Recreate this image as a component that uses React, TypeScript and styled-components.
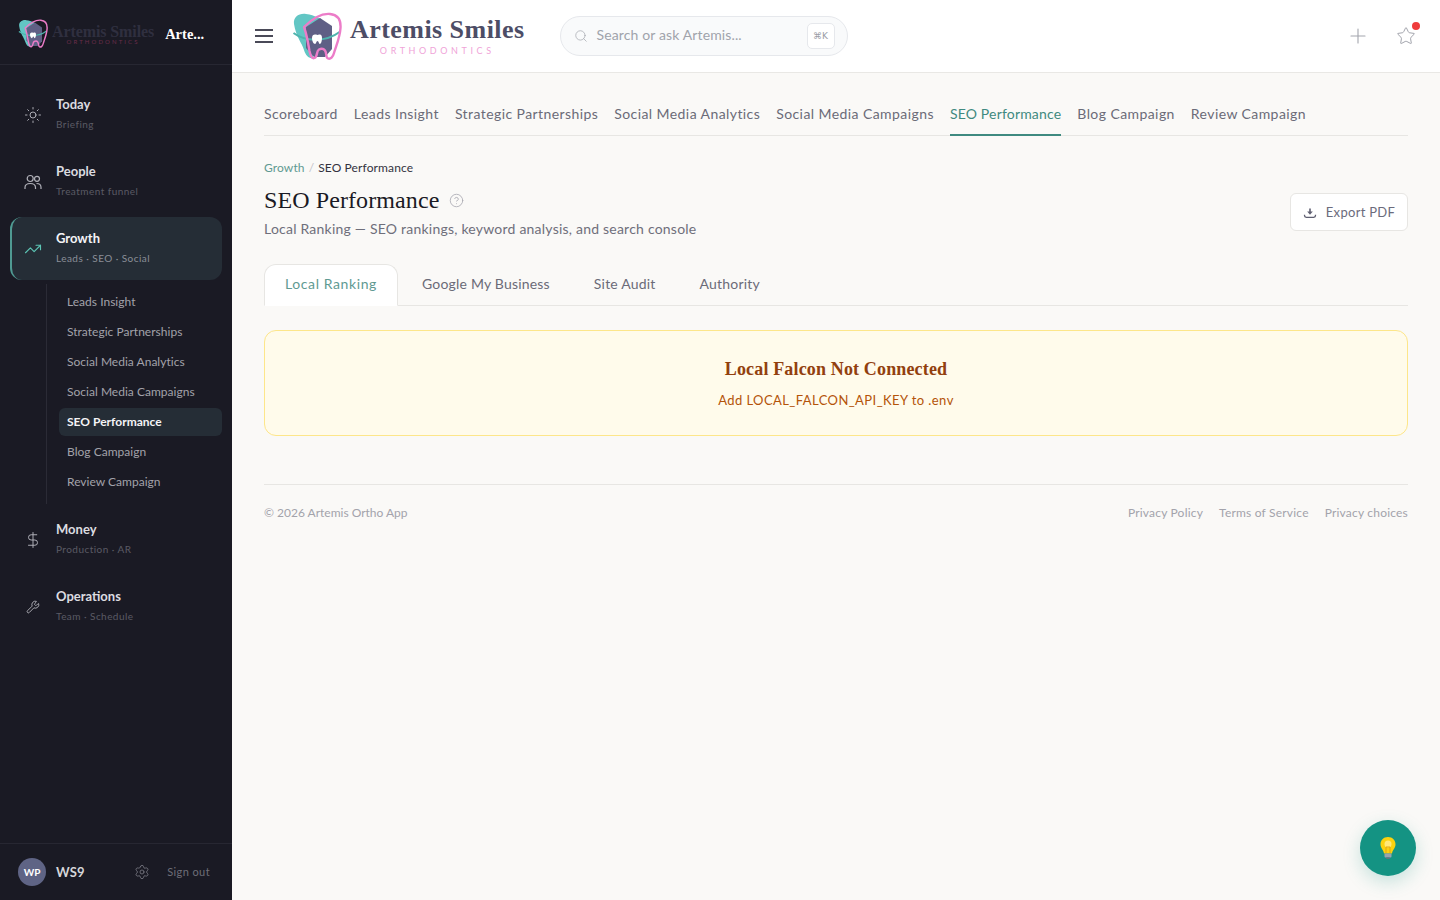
import React from 'react';
import styled, { createGlobalStyle } from 'styled-components';
import { Sun, TrendingUp, DollarSign, Wrench, CircleHelp, Settings, Search, Plus, Star } from 'lucide-react';

const sans = '"Lato", "Liberation Sans", sans-serif';
const serif = '"Liberation Serif", "DejaVu Serif", serif';

const GlobalStyle = createGlobalStyle`
  * { box-sizing: border-box; }
  html, body { margin: 0; height: 100%; }
  body { font-family: ${sans}; background: #faf9f7; color: #1a1a24; }
  #root { height: 100%; }
`;

const Shell = styled.div`
  display: flex;
  height: 900px;
  overflow: hidden;
`;

const Sidebar = styled.aside`
  width: 232px;
  flex-shrink: 0;
  background: #1a1a24;
  display: flex;
  flex-direction: column;
`;

const SideBrand = styled.div`
  height: 65px;
  display: flex;
  align-items: center;
  padding: 3px 18px 0;
  gap: 11px;
  border-bottom: 1px solid #272732;
`;

const SideBrandName = styled.span`
  font-family: ${serif};
  font-size: 14.5px;
  font-weight: 700;
  padding-top: 2px;
  color: #fff;
`;

const Nav = styled.nav`
  flex: 1;
  padding: 18px 10px 0;
  display: flex;
  flex-direction: column;
  gap: 4px;
`;

const NavCard = styled.div<{ $active?: boolean }>`
  height: 63px;
  display: flex;
  align-items: center;
  gap: 14px;
  padding-left: 12px;
  border-radius: 12px;
  background: ${(p) => (p.$active ? '#252d36' : 'transparent')};
  border-left: 2px solid ${(p) => (p.$active ? '#4f9a92' : 'transparent')};
  color: ${(p) => (p.$active ? '#5cc4b4' : '#b0b0b8')};
`;

const NavIcon = styled.span`
  width: 18px;
  height: 18px;
  display: flex;
  align-items: center;
  justify-content: center;
`;

const NavText = styled.div`
  display: flex;
  flex-direction: column;
  gap: 6px;
  padding-bottom: 2px;
`;

const NavTitle = styled.span<{ $active?: boolean }>`
  font-size: 13px;
  line-height: 16px;
  font-weight: 700;
  letter-spacing: 0;
  color: ${(p) => (p.$active ? '#f4f4f6' : '#dcdce0')};
`;

const NavSub = styled.span<{ $active?: boolean }>`
  font-size: 10px;
  line-height: 13px;
  letter-spacing: 0.45px;
  color: ${(p) => (p.$active ? '#8b8f98' : '#5a5a64')};
`;

const SubList = styled.div`
  margin: 4px 0 0 36px;
  padding: 4px 0 8px 12px;
  border-left: 1px solid #2b2b36;
  display: flex;
  flex-direction: column;
  gap: 2px;
`;

const SubItem = styled.div<{ $active?: boolean }>`
  height: 28px;
  display: flex;
  align-items: center;
  padding: 0 0 2px 8px;
  border-radius: 6px;
  font-size: 12px;
  letter-spacing: 0.02px;
  font-weight: ${(p) => (p.$active ? 700 : 400)};
  background: ${(p) => (p.$active ? '#252d36' : 'transparent')};
  color: ${(p) => (p.$active ? '#f4f4f6' : '#a2a2aa')};
`;

const SideFooter = styled.div`
  height: 57px;
  border-top: 1px solid #272732;
  display: flex;
  align-items: center;
  padding: 0 22px 0 18px;
`;

const Avatar = styled.div`
  width: 28px;
  height: 28px;
  border-radius: 50%;
  background: #5f6485;
  color: #fff;
  font-size: 10px;
  font-weight: 700;
  display: flex;
  align-items: center;
  justify-content: center;
`;

const UserName = styled.span`
  margin-left: 10px;
  font-size: 13px;
  font-weight: 700;
  letter-spacing: 0.2px;
  color: #d6d6da;
  flex: 1;
`;

const SignOut = styled.span`
  margin-left: 17px;
  margin-bottom: 1px;
  font-size: 11px;
  letter-spacing: 0.4px;
  color: #6e6e78;
`;

const GearWrap = styled.span`
  display: flex;
  color: #7c7c86;
`;

const Column = styled.div`
  flex: 1;
  min-width: 0;
  display: flex;
  flex-direction: column;
`;

const Topbar = styled.header`
  height: 73px;
  flex-shrink: 0;
  background: #fff;
  border-bottom: 1px solid #e9e8e5;
  display: flex;
  align-items: center;
  padding: 0 24px 0 23px;
`;

const Burger = styled.div`
  width: 18px;
  height: 14px;
  display: flex;
  flex-direction: column;
  justify-content: space-between;
  margin-right: 19px;
  & > i {
    display: block;
    height: 2px;
    background: #4a4a58;
  }
`;

const LogoWrap = styled.div<{ $small?: boolean }>`
  display: flex;
  align-items: center;
  gap: ${(p) => (p.$small ? '4px' : '8px')};
`;

const LogoWords = styled.div<{ $small?: boolean }>`
  display: flex;
  flex-direction: column;
  align-items: center;
  padding-top: ${(p) => (p.$small ? '4px' : '1px')};
  opacity: ${(p) => (p.$small ? 0.42 : 1)};
`;

const LogoName = styled.span<{ $small?: boolean }>`
  font-family: ${serif};
  font-weight: 700;
  white-space: nowrap;
  font-size: ${(p) => (p.$small ? '16px' : '26px')};
  line-height: ${(p) => (p.$small ? '12px' : '26px')};
  letter-spacing: ${(p) => (p.$small ? '-0.1px' : '0.45px')};
  color: #4d4d66;
`;

const LogoTag = styled.span<{ $small?: boolean }>`
  font-family: ${sans};
  white-space: nowrap;
  margin-top: ${(p) => (p.$small ? '0' : '2px')};
  font-size: ${(p) => (p.$small ? '6px' : '9px')};
  line-height: ${(p) => (p.$small ? '7px' : '11px')};
  letter-spacing: ${(p) => (p.$small ? '2.1px' : '3.6px')};
  color: ${(p) => (p.$small ? '#d4487f' : '#f0a4d8')};
`;

const SearchBox = styled.div`
  width: 288px;
  height: 40px;
  margin-left: 35px;
  border: 1px solid #e6e8ec;
  border-radius: 20px;
  background: #f9fafb;
  display: flex;
  align-items: center;
  padding: 0 12px 0 13px;
  gap: 9px;
  color: #a0a3ab;
`;

const SearchText = styled.span`
  flex: 1;
  font-size: 14px;
  line-height: 18px;
  margin-bottom: 2px;
  letter-spacing: 0.13px;
  color: #a0a3ab;
`;

const KeyHint = styled.span`
  width: 28px;
  height: 26px;
  background: #fff;
  border: 1px solid #e6e8ec;
  border-radius: 5px;
  display: flex;
  align-items: center;
  justify-content: center;
  font-family: "DejaVu Sans", sans-serif;
  font-size: 9px;
  color: #9a9da5;
`;

const TopActions = styled.div`
  margin-left: auto;
  display: flex;
  align-items: center;
  gap: 26px;
  color: #a3a5ad;
`;

const BellWrap = styled.div`
  position: relative;
  display: flex;
`;

const RedDot = styled.span`
  position: absolute;
  top: -4px;
  right: -4px;
  width: 8px;
  height: 8px;
  border-radius: 50%;
  background: #ef3b3b;
`;

const Main = styled.main`
  flex: 1;
  padding: 24px 32px 0;
  display: flex;
  flex-direction: column;
`;

const TopTabs = styled.div`
  display: flex;
  gap: 16px;
  height: 39px;
  border-bottom: 1px solid #e7e6e3;
`;

const TopTab = styled.div<{ $active?: boolean }>`
  height: 39px;
  padding-top: 8px;
  font-size: 14px;
  line-height: 18px;
  letter-spacing: ${(p) => (p.$active ? '0.18px' : '0.42px')};
  white-space: nowrap;
  color: ${(p) => (p.$active ? '#3f8a80' : '#6b6b78')};
  border-bottom: 2px solid ${(p) => (p.$active ? '#3f8a80' : 'transparent')};
`;

const Crumbs = styled.div`
  margin-top: 24px;
  display: flex;
  align-items: center;
  gap: 4px;
  font-size: 12px;
  line-height: 16px;
  letter-spacing: 0.12px;
`;

const CrumbLink = styled.span`
  color: #5f9a92;
`;

const CrumbSep = styled.span`
  color: #c3c3c8;
`;

const CrumbNow = styled.span`
  color: #33333f;
`;

const HeadRow = styled.div`
  margin-top: 8px;
  display: flex;
  align-items: flex-start;
  justify-content: space-between;
`;

const TitleRow = styled.div`
  display: flex;
  align-items: center;
  gap: 10px;
  color: #a8a8b0;
`;

const Title = styled.h1`
  margin: 0;
  font-family: ${serif};
  font-size: 24px;
  line-height: 32px;
  font-weight: 400;
  letter-spacing: 0.1px;
  color: #1a1a24;
`;

const Subtitle = styled.p`
  margin: 3px 0 0;
  font-size: 14px;
  line-height: 20px;
  letter-spacing: 0.22px;
  color: #6f6f7b;
`;

const ExportButton = styled.button`
  margin-top: 9px;
  width: 118px;
  height: 38px;
  background: #fff;
  border: 1px solid #e7e6e3;
  border-radius: 6px;
  display: flex;
  align-items: center;
  justify-content: center;
  gap: 9px;
  font-family: ${sans};
  font-size: 13px;
  letter-spacing: 0.3px;
  color: #6b6b7c;
`;

const SubTabs = styled.div`
  margin-top: 25px;
  height: 42px;
  display: flex;
  border-bottom: 1px solid #e7e6e3;
`;

const SubTab = styled.div<{ $active?: boolean }>`
  height: 42px;
  padding: 10px 20px 0;
  margin-right: ${(p) => (p.$active ? '3px' : '2px')};
  font-size: 14px;
  line-height: 18px;
  letter-spacing: ${(p) => (p.$active ? '0.6px' : '0.2px')};
  color: ${(p) => (p.$active ? '#5f9a92' : '#6b6b78')};
  background: ${(p) => (p.$active ? '#fff' : 'transparent')};
  border: 1px solid ${(p) => (p.$active ? '#e7e6e3' : 'transparent')};
  border-bottom: ${(p) => (p.$active ? '1px solid #fff' : 'none')};
  border-radius: 12px 12px 0 0;
`;

const Notice = styled.section`
  margin-top: 24px;
  height: 106px;
  background: #fffbeb;
  border: 1px solid #fde68a;
  border-radius: 12px;
  display: flex;
  flex-direction: column;
  align-items: center;
  padding-top: 26px;
`;

const NoticeTitle = styled.h3`
  margin: 0;
  font-family: ${serif};
  font-size: 18px;
  line-height: 24px;
  font-weight: 700;
  letter-spacing: 0.15px;
  color: #92400e;
`;

const NoticeText = styled.p`
  margin: 10px 0 0;
  font-size: 13px;
  line-height: 18px;
  letter-spacing: 0.42px;
  color: #b45309;
`;

const PageFooter = styled.footer`
  margin-top: 48px;
  border-top: 1px solid #e7e6e3;
  padding-top: 20px;
  display: flex;
  justify-content: space-between;
  font-size: 12px;
  line-height: 16px;
  color: #a3a3ab;
`;

const FooterLinks = styled.div`
  display: flex;
  gap: 16px;
  letter-spacing: 0.2px;
`;

const Fab = styled.button`
  position: fixed;
  right: 24px;
  bottom: 24px;
  width: 56px;
  height: 56px;
  border: none;
  border-radius: 50%;
  background: #149383;
  box-shadow: 0 6px 18px rgba(20, 147, 131, 0.22);
  display: flex;
  align-items: center;
  justify-content: center;
  padding: 0;
`;

const Tooth: React.FC<{ size: number }> = ({ size }) => (
  <svg width={size} height={(size * 48) / 50} viewBox="0 0 50 48" fill="none">
    <path
      d="M2 12C1 5 7 1 14 2c5 .6 8 2 11 3l4 2-7 7-1 32c-4 .8-7-2-9-8C10 31 4 25 2 12Z"
      fill="#62c6c4"
    />
    <path d="M14 15 28 6l12 8v23l-7 8H22l-8-9Z" fill="#5f5f85" />
    <path d="M1.500 21c12 9 33 9 46-1" stroke="#4fb4ae" strokeWidth="2" />
    <path
      d="M20 26c0-3 2-4 4-3.400 1.400.4 2 .4 3 0 2-.6 3 .6 3 3.400 0 3-1 6-2.200 6-1 0-1-3-2.300-3-1.300 0-1.300 3-2.400 3C21.500 32 20 29 20 26Z"
      fill="#fff"
    />
    <path
      d="M12 15C20 7 28 1 38 2c8 .8 11 6 10.500 14-.5 9-4 17-6.500 25-1 4-3.500 6.500-6 5.500-2.500-1-1-5-3-8-1.500-2-4-2-6-1-3 1.500-1 7-4.500 8.500-3 1.200-4-3-5-7-1-5-2-14-5.500-24Z"
      stroke="#ec7cc8"
      strokeWidth="2.400"
      strokeLinejoin="round"
    />
  </svg>
);

const Logo: React.FC<{ small?: boolean }> = ({ small }) => (
  <LogoWrap $small={small}>
    <Tooth size={small ? 30 : 50} />
    <LogoWords $small={small}>
      <LogoName $small={small}>Artemis Smiles</LogoName>
      <LogoTag $small={small}>ORTHODONTICS</LogoTag>
    </LogoWords>
  </LogoWrap>
);

const PeopleIcon: React.FC = () => (
  <svg width="18" height="18" viewBox="0 0 18 18" fill="none" stroke="currentColor" strokeWidth="1.200">
    <circle cx="6.200" cy="5.500" r="3" />
    <circle cx="13" cy="5.800" r="2.500" />
    <path d="M1 16v-1.500C1 12 3 10.500 6.200 10.500s5.300 1.500 5.300 4V16" />
    <path d="M12.500 10.500c2.800 0 4.500 1.400 4.500 3.800V16" />
  </svg>
);

const TrayIcon: React.FC = () => (
  <svg width="14" height="14" viewBox="0 0 14 14" fill="none">
    <path d="M7 3.500v4" stroke="#5e5e70" strokeWidth="1.600" />
    <path d="M4.200 6.500h5.600L7 9.800Z" fill="#5e5e70" />
    <path d="M1.500 9.800v.7c0 1.200.6 1.800 1.800 1.800h7.400c1.200 0 1.800-.6 1.800-1.800v-.7" stroke="#5e5e70" strokeWidth="1.300" />
  </svg>
);

const BulbIcon: React.FC = () => (
  <svg width="18" height="24" viewBox="0 0 18 24">
    <path d="M9 1C4.300 1 1.500 4.400 1.500 8.200c0 4 3 5.400 3.500 9.300h8c.5-3.900 3.500-5.300 3.500-9.300C16.500 4.400 13.700 1 9 1Z" fill="#fbd20f" />
    <circle cx="9" cy="8" r="3.500" fill="#ffe97a" />
    <path d="M7 17V11h4v6" fill="none" stroke="#e2a60e" strokeWidth="1" />
    <rect x="5.500" y="17.500" width="7" height="4" rx="1" fill="#9aa3ad" />
    <rect x="7" y="21.500" width="4" height="1.500" rx=".7" fill="#66707a" />
  </svg>
);

const growthLinks = [
  'Leads Insight',
  'Strategic Partnerships',
  'Social Media Analytics',
  'Social Media Campaigns',
  'SEO Performance',
  'Blog Campaign',
  'Review Campaign',
];

const topTabs = [
  'Scoreboard',
  'Leads Insight',
  'Strategic Partnerships',
  'Social Media Analytics',
  'Social Media Campaigns',
  'SEO Performance',
  'Blog Campaign',
  'Review Campaign',
];

const subTabs = ['Local Ranking', 'Google My Business', 'Site Audit', 'Authority'];

const App: React.FC = () => {
  return (
    <>
      <GlobalStyle />
      <Shell>
        <Sidebar>
          <SideBrand>
            <Logo small />
            <SideBrandName>Arte...</SideBrandName>
          </SideBrand>
          <Nav>
            <NavCard>
              <NavIcon>
                <Sun size={18} strokeWidth={1.3} />
              </NavIcon>
              <NavText>
                <NavTitle>Today</NavTitle>
                <NavSub>Briefing</NavSub>
              </NavText>
            </NavCard>
            <NavCard>
              <NavIcon>
                <PeopleIcon />
              </NavIcon>
              <NavText>
                <NavTitle>People</NavTitle>
                <NavSub>Treatment funnel</NavSub>
              </NavText>
            </NavCard>
            <div>
              <NavCard $active>
                <NavIcon>
                  <TrendingUp size={18} strokeWidth={1.5} />
                </NavIcon>
                <NavText>
                  <NavTitle $active>Growth</NavTitle>
                  <NavSub $active>Leads · SEO · Social</NavSub>
                </NavText>
              </NavCard>
              <SubList>
                {growthLinks.map((link) => (
                  <SubItem key={link} $active={link === 'SEO Performance'}>
                    {link}
                  </SubItem>
                ))}
              </SubList>
            </div>
            <NavCard>
              <NavIcon>
                <DollarSign size={18} strokeWidth={1.3} />
              </NavIcon>
              <NavText>
                <NavTitle>Money</NavTitle>
                <NavSub>Production · AR</NavSub>
              </NavText>
            </NavCard>
            <NavCard>
              <NavIcon>
                <Wrench size={14} strokeWidth={1.6} />
              </NavIcon>
              <NavText>
                <NavTitle>Operations</NavTitle>
                <NavSub>Team · Schedule</NavSub>
              </NavText>
            </NavCard>
          </Nav>
          <SideFooter>
            <Avatar>WP</Avatar>
            <UserName>WS9</UserName>
            <GearWrap>
              <Settings size={16} strokeWidth={1.2} />
            </GearWrap>
            <SignOut>Sign out</SignOut>
          </SideFooter>
        </Sidebar>
        <Column>
          <Topbar>
            <Burger>
              <i />
              <i />
              <i />
            </Burger>
            <Logo />
            <SearchBox>
              <Search size={14} strokeWidth={1.2} />
              <SearchText>Search or ask Artemis...</SearchText>
              <KeyHint>⌘K</KeyHint>
            </SearchBox>
            <TopActions>
              <Plus size={24} strokeWidth={1.1} />
              <BellWrap>
                <Star size={20} strokeWidth={1.2} />
                <RedDot />
              </BellWrap>
            </TopActions>
          </Topbar>
          <Main>
            <TopTabs>
              {topTabs.map((tab) => (
                <TopTab key={tab} $active={tab === 'SEO Performance'}>
                  {tab}
                </TopTab>
              ))}
            </TopTabs>
            <Crumbs>
              <CrumbLink>Growth</CrumbLink>
              <CrumbSep>/</CrumbSep>
              <CrumbNow>SEO Performance</CrumbNow>
            </Crumbs>
            <HeadRow>
              <div>
                <TitleRow>
                  <Title>SEO Performance</Title>
                  <CircleHelp size={15} strokeWidth={1.3} />
                </TitleRow>
                <Subtitle>Local Ranking — SEO rankings, keyword analysis, and search console</Subtitle>
              </div>
              <ExportButton>
                <TrayIcon />
                Export PDF
              </ExportButton>
            </HeadRow>
            <SubTabs>
              {subTabs.map((tab) => (
                <SubTab key={tab} $active={tab === 'Local Ranking'}>
                  {tab}
                </SubTab>
              ))}
            </SubTabs>
            <Notice>
              <NoticeTitle>Local Falcon Not Connected</NoticeTitle>
              <NoticeText>Add LOCAL_FALCON_API_KEY to .env</NoticeText>
            </Notice>
            <PageFooter>
              <span>© 2026 Artemis Ortho App</span>
              <FooterLinks>
                <span>Privacy Policy</span>
                <span>Terms of Service</span>
                <span>Privacy choices</span>
              </FooterLinks>
            </PageFooter>
          </Main>
        </Column>
      </Shell>
      <Fab aria-label="Ideas">
        <BulbIcon />
      </Fab>
    </>
  );
};

export default App;
